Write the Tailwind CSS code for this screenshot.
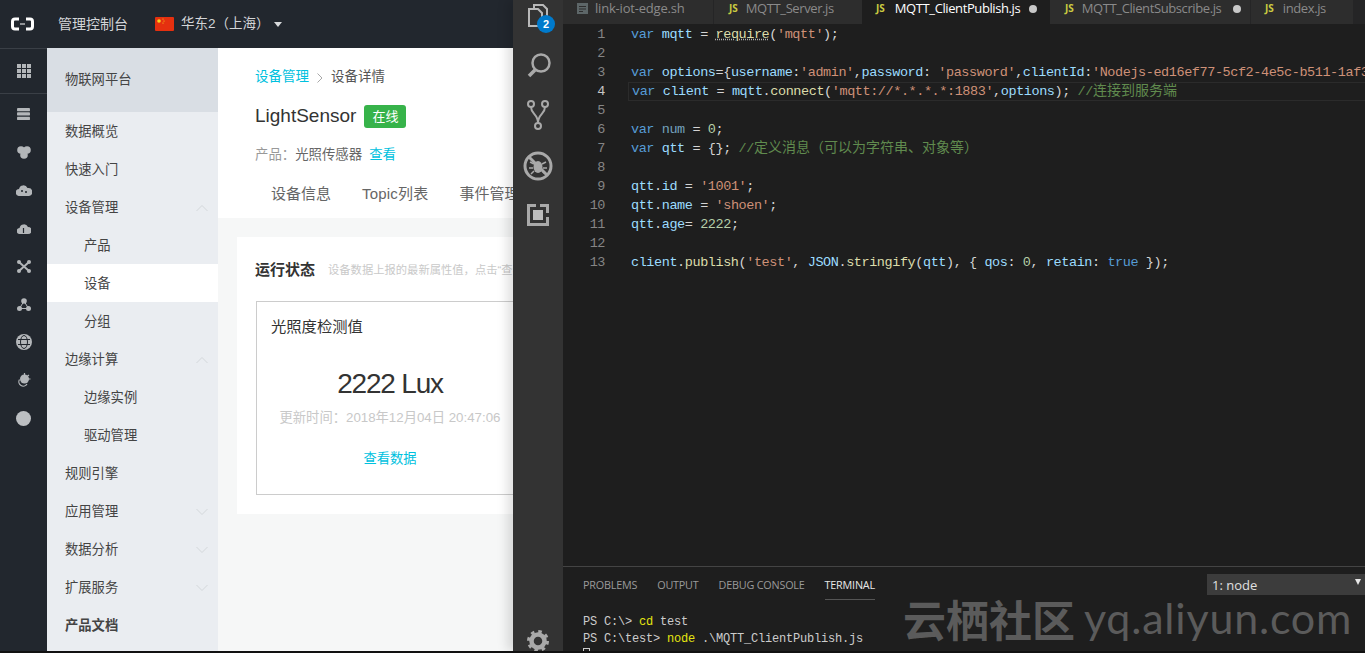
<!DOCTYPE html>
<html lang="zh-CN">
<head>
  <meta charset="UTF-8">
  <title>MQTT_ClientPublish.js</title>
  <script src="https://cdn.jsdelivr.net/npm/@tailwindcss/browser@4"></script>
</head>
<body class="bg-[#111111] h-[653px] w-[1365px] overflow-hidden font-['Liberation_Sans','Noto_Sans_CJK_SC',sans-serif]">
  <div class="flex h-[651px] overflow-hidden">

    <!-- console on the left -->
    <div class="w-[513px] shrink-0 flex flex-col overflow-hidden">
      <header class="h-[48px] shrink-0 bg-[#22272e] flex items-center text-[#d3d5d8]">
        <svg class="ml-[11px] w-[23px] h-[14px]" viewBox="0 0 23 14" fill="none" stroke="#ffffff" stroke-width="3">
          <path d="M8 2H4Q1.5 2 1.5 4.5V9.5Q1.5 12 4 12H8"/><path d="M15 2H19Q21.500 2 21.500 4.500V9.500Q21.500 12 19 12H15"/><path d="M9 7H14" stroke-width="1"/>
        </svg>
        <span class="ml-[24px] text-[14px]">管理控制台</span>
        <svg class="ml-[27px] w-[19px] h-[14px]" viewBox="0 0 19 14"><rect width="19" height="14" rx="1" fill="#e5300f"/><circle cx="4" cy="4" r="1.800" fill="#f7d21e"/><circle cx="8" cy="2" r=".6" fill="#f7d21e"/><circle cx="9" cy="4" r=".6" fill="#f7d21e"/><circle cx="8" cy="6" r=".6" fill="#f7d21e"/></svg>
        <span class="ml-[7px] text-[13.500px]">华东2（上海）</span>
        <span class="ml-[4px] w-0 h-0 border-x-[4px] border-x-transparent border-t-[5px] border-t-[#d8dadc]"></span>
      </header>

      <div class="flex flex-1 min-h-0">
        <!-- icon rail -->
        <nav class="w-[47px] shrink-0 bg-[#22272e] flex flex-col items-center text-[#b3b6b9]">
          <div class="h-[46px] w-full shrink-0 border-y border-[#3a3f46] flex items-center justify-center">
            <svg class="w-[14px] h-[14px]" viewBox="0 0 14 14" fill="currentColor"><rect width="4" height="4"/><rect x="5" width="4" height="4"/><rect x="10" width="4" height="4"/><rect y="5" width="4" height="4"/><rect x="5" y="5" width="4" height="4"/><rect x="10" y="5" width="4" height="4"/><rect y="10" width="4" height="4"/><rect x="5" y="10" width="4" height="4"/><rect x="10" y="10" width="4" height="4"/></svg>
          </div>
          <div class="h-[38px] mt-[1px] shrink-0 flex items-center">
            <svg class="w-[13px] h-[12px]" viewBox="0 0 14 13" fill="currentColor"><rect width="14" height="3.500" rx=".5"/><rect y="4.700" width="14" height="3.500" rx=".5"/><rect y="9.400" width="14" height="3.500" rx=".5"/></svg>
          </div>
          <div class="h-[38px] shrink-0 flex items-center">
            <svg class="w-[14px] h-[13px]" viewBox="0 0 14 13" fill="currentColor"><circle cx="4" cy="4" r="3.800"/><circle cx="10" cy="4" r="3.800"/><circle cx="7" cy="9" r="3.800"/></svg>
          </div>
          <div class="h-[38px] shrink-0 flex items-center">
            <svg class="w-[16px] h-[12px]" viewBox="0 0 16 12" fill="currentColor"><path d="M3.500 12A3.500 3.500 0 0 1 3 5 A4.500 4.500 0 0 1 11.500 4 A4 4 0 0 1 13 12Z"/><circle cx="6" cy="7" r="1" fill="#22272e"/><circle cx="10" cy="8" r="1" fill="#22272e"/></svg>
          </div>
          <div class="h-[38px] shrink-0 flex items-center">
            <svg class="w-[14px] h-[11px]" viewBox="0 0 14 11" fill="currentColor"><path d="M3 11A3 3 0 0 1 2.500 5 A4.500 4.500 0 0 1 11 4 A3.500 3.500 0 0 1 11 11Z"/><path d="M6.500 5V10" stroke="#22272e" stroke-width="1.200"/></svg>
          </div>
          <div class="h-[38px] shrink-0 flex items-center">
            <svg class="w-[14px] h-[13px]" viewBox="0 0 14 13" fill="currentColor"><circle cx="2" cy="2" r="2"/><circle cx="12" cy="2" r="2"/><circle cx="2" cy="11" r="2"/><circle cx="12" cy="11" r="2"/><path d="M2 2L12 11M12 2L2 11" stroke="currentColor" stroke-width="2"/></svg>
          </div>
          <div class="h-[38px] shrink-0 flex items-center">
            <svg class="w-[14px] h-[13px]" viewBox="0 0 14 13" fill="currentColor"><circle cx="7" cy="3" r="2.800"/><circle cx="2.500" cy="10.500" r="2.500"/><circle cx="11.500" cy="10.500" r="2.500"/><path d="M7 3L2.500 10.500H11.500Z" fill="none" stroke="currentColor"/></svg>
          </div>
          <div class="h-[38px] shrink-0 flex items-center">
            <svg class="w-[16px] h-[16px]" viewBox="0 0 16 16" fill="none" stroke="#22272e" stroke-width="1"><circle cx="8" cy="8" r="8" fill="#b3b6b9" stroke="none"/><ellipse cx="8" cy="8" rx="3.500" ry="6.500"/><path d="M2 5.500H14M2 10.500H14"/></svg>
          </div>
          <div class="h-[38px] shrink-0 flex items-center">
            <svg class="w-[15px] h-[14px]" viewBox="0 0 15 14"><circle cx="8.500" cy="6" r="4.500" fill="#b3b6b9"/><path d="M8.500 0V2M14.500 6H12M13 2L11 3.500M3.500 6.500A4 4 0 1 0 11 11" fill="none" stroke="#b3b6b9" stroke-width="1.200"/></svg>
          </div>
          <div class="h-[38px] shrink-0 flex items-center"><span class="block w-[15px] h-[15px] rounded-full bg-[#bcbfc2]"></span></div>
        </nav>

        <!-- product sidebar -->
        <aside class="w-[171px] shrink-0 bg-[#eaedf1] text-[13.300px] text-[#444444] [&>div]:pt-[2px]">
          <div class="h-[64px] bg-[#d9dee4] pl-[18px] flex items-center pb-[2px]">物联网平台</div>
          <div class="h-[38px] pl-[18px] flex items-center">数据概览</div>
          <div class="h-[38px] pl-[18px] flex items-center">快速入门</div>
          <div class="h-[38px] pl-[18px] pr-[10px] flex items-center justify-between">设备管理
            <svg class="w-[12px] h-[6px]" viewBox="0 0 12 6" fill="none" stroke="#d3d7da"><path d="M.5 6L6 .5L11.500 6"/></svg>
          </div>
          <div class="h-[38px] pl-[37px] flex items-center">产品</div>
          <div class="h-[38px] pl-[37px] flex items-center bg-white">设备</div>
          <div class="h-[38px] pl-[37px] flex items-center">分组</div>
          <div class="h-[38px] pl-[18px] pr-[10px] flex items-center justify-between">边缘计算
            <svg class="w-[12px] h-[6px]" viewBox="0 0 12 6" fill="none" stroke="#d3d7da"><path d="M.5 6L6 .5L11.500 6"/></svg>
          </div>
          <div class="h-[38px] pl-[37px] flex items-center">边缘实例</div>
          <div class="h-[38px] pl-[37px] flex items-center">驱动管理</div>
          <div class="h-[38px] pl-[18px] flex items-center">规则引擎</div>
          <div class="h-[38px] pl-[18px] pr-[10px] flex items-center justify-between">应用管理
            <svg class="w-[12px] h-[6px]" viewBox="0 0 12 6" fill="none" stroke="#d3d7da"><path d="M.5 0L6 5.500L11.500 0"/></svg>
          </div>
          <div class="h-[38px] pl-[18px] pr-[10px] flex items-center justify-between">数据分析
            <svg class="w-[12px] h-[6px]" viewBox="0 0 12 6" fill="none" stroke="#d3d7da"><path d="M.5 0L6 5.500L11.500 0"/></svg>
          </div>
          <div class="h-[38px] pl-[18px] pr-[10px] flex items-center justify-between">扩展服务
            <svg class="w-[12px] h-[6px]" viewBox="0 0 12 6" fill="none" stroke="#d3d7da"><path d="M.5 0L6 5.500L11.500 0"/></svg>
          </div>
          <div class="h-[38px] pl-[18px] flex items-center font-bold">产品文档</div>
        </aside>

        <!-- device detail -->
        <main class="flex-1 min-w-0 bg-[#f6f7f7] overflow-hidden">
          <section class="h-[170px] bg-white pl-[37px] whitespace-nowrap overflow-hidden">
            <div class="pt-[21px] h-[38px] flex items-center text-[13.500px] text-[#555555]">
              <span class="text-[#00c1de]">设备管理</span>
              <svg class="mx-[8px] w-[6px] h-[10px]" viewBox="0 0 6 10" fill="none" stroke="#a8a8a8"><path d="M.5 .5L5 5L.5 9.500"/></svg>
              <span>设备详情</span>
            </div>
            <div class="mt-[19px] h-[23px] flex items-center">
              <span class="text-[19px] text-[#333333]">LightSensor</span>
              <span class="ml-[8px] w-[42px] h-[23px] rounded-[3px] bg-[#37b34a] text-white text-[13px] flex items-center justify-center">在线</span>
            </div>
            <div class="mt-[18px] text-[13.400px] h-[18px] leading-[18px] text-[#666666]"><span class="text-[#999999]">产品：</span>光照传感器<span class="ml-[7px] text-[#00c1de]">查看</span></div>
            <div class="mt-[19px] pl-[16px] flex gap-[31px] text-[15px] text-[#666666]"><span>设备信息</span><span class="tracking-[0.2px]">Topic列表</span><span>事件管理</span></div>
          </section>

          <section class="mt-[19px] ml-[19px] h-[277px] bg-white pl-[18px] pt-[24px] whitespace-nowrap overflow-hidden">
            <div class="flex items-center h-[18px]">
              <span class="text-[15px] font-bold text-[#333333]">运行状态</span>
              <span class="ml-[13px] text-[11.300px] text-[#c9c9c9]">设备数据上报的最新属性值，点击“查看数据”可查看历史记录</span>
            </div>
            <div class="mt-[22px] ml-[1px] w-[268px] h-[194px] border border-[#cccccc] relative flex flex-col items-center">
              <div class="self-start mt-[15px] ml-[14px] text-[15.300px] h-[20px] leading-[20px] text-[#333333]">光照度检测值</div>
              <div class="mt-[30px] text-[28px] h-[34px] leading-[34px] tracking-[-1.2px] text-[#333333]">2222 Lux</div>
              <div class="mt-[8px] text-[13.300px] h-[18px] leading-[18px] text-[#c8c8c8]">更新时间：2018年12月04日 20:47:06</div>
              <div class="mt-[23px] text-[13.300px] h-[18px] leading-[18px] text-[#00c1de]">查看数据</div>
            </div>
          </section>
        </main>
      </div>
    </div>

    <!-- VS Code on the right -->
    <div class="w-[852px] shrink-0 relative flex shadow-[-6px_0_10px_rgba(0,0,0,0.12)]">
      <div class="w-[50px] shrink-0 bg-[#333333] flex flex-col items-center relative">
        <svg class="absolute left-[15px] top-[4px] w-[20px] h-[23px]" viewBox="0 0 20 23" fill="none" stroke="#b9b9b9" stroke-width="2"><path d="M6 5V1H15L19 5V18H14"/><path d="M1 5H10L14 9V22H1Z"/></svg>
        <span class="absolute left-[24px] top-[15px] w-[18px] h-[18px] rounded-full bg-[#007acc] text-white text-[11px] font-bold flex items-center justify-center">2</span>
        <svg class="absolute left-[14px] top-[52px] w-[24px] h-[26px]" viewBox="0 0 24 26" fill="none" stroke="#a9a9a9" stroke-width="2.500"><circle cx="14" cy="11" r="8.500"/><path d="M8 18L2 24" stroke-width="3.500"/></svg>
        <svg class="absolute left-[14px] top-[100px] w-[22px] h-[30px]" viewBox="0 0 22 30" fill="none" stroke="#a9a9a9" stroke-width="2"><circle cx="4" cy="4" r="3"/><circle cx="18" cy="4" r="3"/><circle cx="11" cy="26" r="3"/><path d="M4 7C4 14 11 14 11 23M18 7C18 14 11 14 11 23"/></svg>
        <svg class="absolute left-[10px] top-[151px] w-[30px] h-[30px]" viewBox="0 0 30 30" fill="none" stroke="#a9a9a9"><circle cx="15" cy="15" r="13" stroke-width="3"/><path d="M6 6L24 24" stroke-width="3"/><ellipse cx="15" cy="16" rx="4.500" ry="6" fill="#a9a9a9" stroke="none"/><path d="M7 11L11 13M23 11L19 13M6 17H10M24 17H20M8 23L11 20M22 23L19 20" stroke-width="1.500"/></svg>
        <svg class="absolute left-[14px] top-[204px] w-[22px] h-[22px]" viewBox="0 0 22 22" fill="none" stroke="#a9a9a9" stroke-width="3"><path d="M9 1.500H1.500V20.500H20.500V13"/><path d="M13 1.500H20.500V9"/><rect x="6" y="6" width="10" height="10" fill="#bdbdbd" stroke="none"/></svg>
        <svg class="absolute left-[14px] top-[630px] w-[22px] h-[22px]" viewBox="0 0 22 22" fill="none" stroke="#a9a9a9"><circle cx="11" cy="11" r="6.500" stroke-width="4.500"/><circle cx="11" cy="11" r="9.500" stroke-width="3" stroke-dasharray="3.500 3.960"/></svg>
      </div>

      <div class="flex-1 min-w-0 bg-[#1e1e1e] flex flex-col">
        <div class="h-[24px] shrink-0 bg-[#252526] flex text-[13px] tracking-[-0.4px] font-['Open_Sans','Noto_Sans_CJK_SC',sans-serif] whitespace-nowrap text-[#8a8a8a]">
          <div class="w-[151px] bg-[#2d2d2d] flex items-center pb-[7px] pl-[14px] gap-[7px] border-r border-[#252526]">
            <svg class="w-[11px] h-[11px]" viewBox="0 0 11 11" fill="#5d6668"><path fill-rule="evenodd" d="M0 0H11V11H0ZM2 3V4H9V3ZM2 5.500V6.500H9V5.500ZM2 8V9H6V8Z"/></svg>
            <span class="tracking-[-0.2px]">link-iot-edge.sh</span>
          </div>
          <div class="w-[148px] bg-[#2d2d2d] flex items-center pb-[7px] pl-[15px] gap-[8px]">
            <span class="text-[10px] font-bold tracking-normal text-[#cbcb41]">JS</span><span>MQTT_Server.js</span>
          </div>
          <div class="w-[188px] bg-[#1e1e1e] flex items-center pb-[7px] pl-[14px] gap-[10px] text-white">
            <span class="text-[10px] font-bold tracking-normal text-[#cbcb41]">JS</span><span>MQTT_ClientPublish.js</span>
            <span class="-ml-[1px] w-[8px] h-[8px] rounded-full bg-[#c8c8c8]"></span>
          </div>
          <div class="w-[201px] bg-[#2d2d2d] flex items-center pb-[7px] pl-[15px] gap-[8px] border-r border-[#252526]">
            <span class="text-[10px] font-bold tracking-normal text-[#cbcb41]">JS</span><span>MQTT_ClientSubscribe.js</span>
            <span class="ml-[4px] w-[8px] h-[8px] rounded-full bg-[#c8c8c8]"></span>
          </div>
          <div class="w-[102px] bg-[#2d2d2d] flex items-center pb-[7px] pl-[14px] gap-[9px]">
            <span class="text-[10px] font-bold tracking-normal text-[#cbcb41]">JS</span><span>index.js</span>
          </div>
        </div>

        <div class="h-[542px] shrink-0 pt-[1px] overflow-hidden font-['Liberation_Mono','Noto_Sans_CJK_SC',monospace] text-[13.500px] tracking-[-0.42px] leading-[19px] text-[#d4d4d4]">
          <div class="flex h-[19px] whitespace-pre"><span class="w-[42px] shrink-0 text-right text-[#858585]">1</span><span class="ml-[26px] shrink-0"><span class="text-[#569cd6]">var</span> <span class="text-[#9cdcfe]">mqtt</span> = <span class="text-[#dcdcaa] underline decoration-dotted decoration-[#b0b0b0]">require</span>(<span class="text-[#ce9178]">'mqtt'</span>);</span></div>
          <div class="flex h-[19px] whitespace-pre"><span class="w-[42px] shrink-0 text-right text-[#858585]">2</span></div>
          <div class="flex h-[19px] whitespace-pre"><span class="w-[42px] shrink-0 text-right text-[#858585]">3</span><span class="ml-[26px] shrink-0"><span class="text-[#569cd6]">var</span> <span class="text-[#9cdcfe]">options</span>={<span class="text-[#9cdcfe]">username</span>:<span class="text-[#ce9178]">'admin'</span>,<span class="text-[#9cdcfe]">password</span>: <span class="text-[#ce9178]">'password'</span>,<span class="text-[#9cdcfe]">clientId</span>:<span class="text-[#ce9178]">'Nodejs-ed16ef77-5cf2-4e5c-b511-1af3</span></span></div>
          <div class="flex h-[19px] whitespace-pre"><span class="w-[42px] shrink-0 text-right text-[#c6c6c6]">4</span><span class="ml-[23px] pl-[3px] flex-1 border-y border-l border-[#2b2b2b] leading-[17px]"><span class="text-[#569cd6]">var</span> <span class="text-[#9cdcfe]">client</span> = <span class="text-[#9cdcfe]">mqtt</span>.<span class="text-[#dcdcaa]">connect</span>(<span class="text-[#ce9178]">'mqtt://*.*.*.*:1883'</span>,<span class="text-[#9cdcfe]">options</span>); <span class="text-[#608b4e]">//<span class="text-[14px] tracking-normal">连接到服务端</span></span></span></div>
          <div class="flex h-[19px] whitespace-pre"><span class="w-[42px] shrink-0 text-right text-[#858585]">5</span></div>
          <div class="flex h-[19px] whitespace-pre"><span class="w-[42px] shrink-0 text-right text-[#858585]">6</span><span class="ml-[26px] shrink-0"><span class="text-[#569cd6]">var</span> <span class="text-[#9cdcfe]/70">num</span> = <span class="text-[#b5cea8]">0</span>;</span></div>
          <div class="flex h-[19px] whitespace-pre"><span class="w-[42px] shrink-0 text-right text-[#858585]">7</span><span class="ml-[26px] shrink-0"><span class="text-[#569cd6]">var</span> <span class="text-[#9cdcfe]">qtt</span> = {}; <span class="text-[#608b4e]">//<span class="text-[14px] tracking-normal">定义消息（可以为字符串、对象等）</span></span></span></div>
          <div class="flex h-[19px] whitespace-pre"><span class="w-[42px] shrink-0 text-right text-[#858585]">8</span></div>
          <div class="flex h-[19px] whitespace-pre"><span class="w-[42px] shrink-0 text-right text-[#858585]">9</span><span class="ml-[26px] shrink-0"><span class="text-[#9cdcfe]">qtt</span>.<span class="text-[#9cdcfe]">id</span> = <span class="text-[#ce9178]">'1001'</span>;</span></div>
          <div class="flex h-[19px] whitespace-pre"><span class="w-[42px] shrink-0 text-right text-[#858585]">10</span><span class="ml-[26px] shrink-0"><span class="text-[#9cdcfe]">qtt</span>.<span class="text-[#9cdcfe]">name</span> = <span class="text-[#ce9178]">'shoen'</span>;</span></div>
          <div class="flex h-[19px] whitespace-pre"><span class="w-[42px] shrink-0 text-right text-[#858585]">11</span><span class="ml-[26px] shrink-0"><span class="text-[#9cdcfe]">qtt</span>.<span class="text-[#9cdcfe]">age</span>= <span class="text-[#b5cea8]">2222</span>;</span></div>
          <div class="flex h-[19px] whitespace-pre"><span class="w-[42px] shrink-0 text-right text-[#858585]">12</span></div>
          <div class="flex h-[19px] whitespace-pre"><span class="w-[42px] shrink-0 text-right text-[#858585]">13</span><span class="ml-[26px] shrink-0"><span class="text-[#9cdcfe]">client</span>.<span class="text-[#dcdcaa]">publish</span>(<span class="text-[#ce9178]">'test'</span>, <span class="text-[#9cdcfe]">JSON</span>.<span class="text-[#dcdcaa]">stringify</span>(<span class="text-[#9cdcfe]">qtt</span>), { <span class="text-[#9cdcfe]">qos</span>: <span class="text-[#b5cea8]">0</span>, <span class="text-[#9cdcfe]">retain</span>: <span class="text-[#569cd6]">true</span> });</span></div>
        </div>

        <div class="flex-1 min-h-0 border-t border-[#444444] overflow-hidden">
          <div class="h-[36px] flex items-start justify-between">
            <div class="pl-[20px] pt-[10px] flex gap-[20px] text-[10.800px] tracking-[-0.2px] font-['Open_Sans',sans-serif] text-[#9a9a9a]">
              <span>PROBLEMS</span><span>OUTPUT</span><span>DEBUG CONSOLE</span>
              <span class="text-[#e7e7e7] border-b border-[#555555] pb-[6px]">TERMINAL</span>
            </div>
            <div class="mt-[7px] w-[158px] h-[21px] bg-[#3c3c3c] flex items-center justify-between pl-[5px] pr-[4px] text-[13px] text-[#e0e0e0] font-['Open_Sans',sans-serif]">
              <span class="pt-[2px]">1: node</span>
              <span class="w-0 h-0 mb-[6px] border-x-[3.500px] border-x-transparent border-t-[6px] border-t-[#e8e8e8]"></span>
            </div>
          </div>
          <div class="pl-[20px] mt-[11px] font-['Liberation_Mono',monospace] text-[12px] tracking-[-0.2px] leading-[17px] text-[#cccccc]">
            <div class="whitespace-pre">PS C:\&gt; <span class="text-[#e5e510]">cd</span> test</div>
            <div class="whitespace-pre">PS C:\test&gt; <span class="text-[#e5e510]">node</span> .\MQTT_ClientPublish.js</div>
            <div class="w-[7px] h-[14px] border border-[#cccccc]"></div>
          </div>
        </div>
      </div>

      <!-- watermark on top of the terminal -->
      <div class="absolute left-[390px] top-[595px] h-[46px] flex items-center text-[#5b5b5b] whitespace-nowrap">
        <span class="text-[43px] font-bold font-['Noto_Sans_CJK_SC',sans-serif]">云栖社区</span>
        <span class="ml-[9px] text-[43px] font-['Lato','Noto_Sans',sans-serif] tracking-[0.8px]">yq.aliyun.com</span>
      </div>
    </div>
  </div>
</body>
</html>
